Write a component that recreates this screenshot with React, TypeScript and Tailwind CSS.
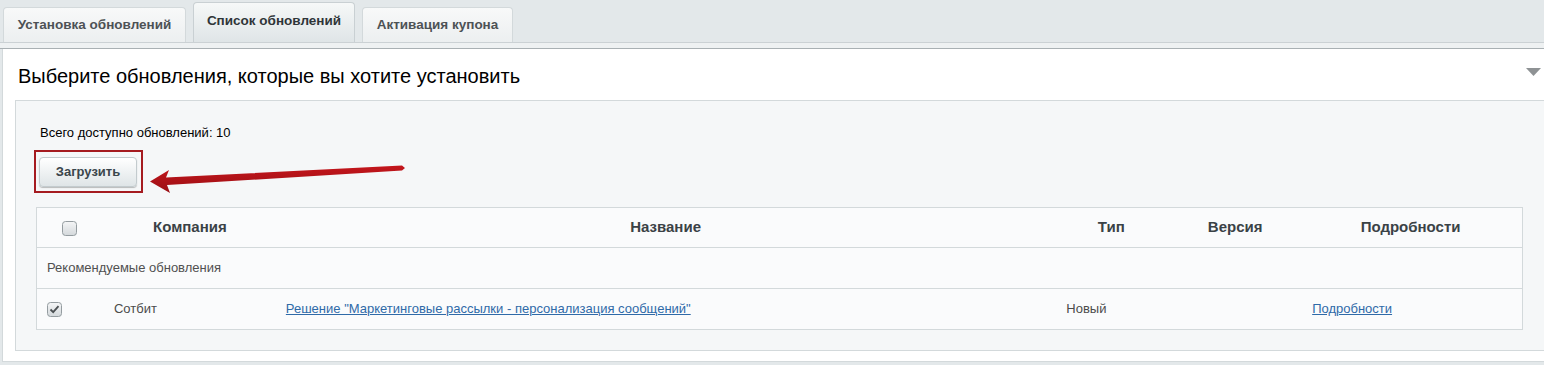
import React from "react";

const font = { fontFamily: '"Liberation Sans", Arial, sans-serif' };

function Tab({ label, active }: { label: string; active?: boolean }) {
	return (
		<div
			className={
				active
					? "flex h-[40px] w-[162px] items-center justify-center rounded-t-[4px] border border-b-0 border-[#c9d0d3] bg-gradient-to-b from-[#f6f8f8] to-[#dfe5e7] pb-[2px] text-[13.5px] font-bold text-[#2f3538]"
					: "flex h-[35px] items-center justify-center rounded-t-[4px] border border-b-0 border-[#d3d9db] bg-gradient-to-b from-[#f8f9f9] to-[#eceff0] text-[13.5px] font-bold text-[#4d5255]"
			}
		>
			{label}
		</div>
	);
}

function Checkbox({ checked }: { checked?: boolean }) {
	return (
		<svg width="15" height="15" viewBox="0 0 15 15">
			<defs>
				<linearGradient id={checked ? "cbc" : "cbu"} x1="0" y1="0" x2="0" y2="1">
					<stop offset="0" stopColor="#f5f6f7" />
					<stop offset="1" stopColor="#d3d8db" />
				</linearGradient>
			</defs>
			<rect
				x="0.5"
				y="0.5"
				width="14"
				height="14"
				rx="3"
				fill={`url(#${checked ? "cbc" : "cbu"})`}
				stroke="#949ca0"
			/>
			{checked && (
				<path d="M3.5 7.5 L6.2 10.2 L11.5 4.2" fill="none" stroke="#4a4f52" strokeWidth="1.8" />
			)}
		</svg>
	);
}

export default function App() {
	return (
		<div className="relative h-[365px] w-[1544px] overflow-hidden bg-[#e3e8ea]" style={font}>
			{/* tabs */}
			<div className="flex h-[42px] items-end gap-[7px] pl-[3px]">
				<div className="w-[183px]">
					<Tab label="Установка обновлений" />
				</div>
				<Tab label="Список обновлений" active={true} />
				<div className="w-[151px]">
					<Tab label="Активация купона" />
				</div>
			</div>
			<div className="h-[7px] border-t border-b border-t-[#cbd1d4] border-b-[#a9b0b3] bg-[#eef1f2]" />

			{/* panel */}
			<div className="ml-[2px] h-[313px] border-l border-b border-[#d3d9db] bg-white">
				<div className="flex h-[51px] items-center justify-between pl-[15px] pr-[3px]">
					<div className="pt-[2px] text-[20px] text-black">Выберите обновления, которые вы хотите установить</div>
					<svg width="15" height="9" viewBox="0 0 15 9" className="mt-[-5px]">
						<polygon points="0,0 15,0 7.5,8" fill="#8e9294" />
					</svg>
				</div>

				<div className="ml-[12px] h-[251px] border-t border-b border-l border-[#d3d9db] bg-[#f5f7f8] pt-[25px] pl-[24px] pr-[21px]">
					<div className="text-[13px] leading-[14px] text-black">Всего доступно обновлений: 10</div>

					<div className="mt-[10px] ml-[-6px] inline-flex border-2 border-[#a51b20] pt-[5px] pr-[4px] pb-[4px] pl-[3px]">
						<button className="h-[30px] w-[98px] rounded-[4px] border border-[#c3cbce] bg-gradient-to-b from-white to-[#dfe5e7] text-[13px] font-bold text-[#3b464c] shadow-[0_1px_1px_rgba(0,0,0,0.25)]">
							Загрузить
						</button>
					</div>

					{/* table */}
					<div className="mt-[14px] ml-[-4px] border border-[#d3d9db] bg-[#fafbfc] text-[13px] text-[#4b4b4b]">
						<div className="flex h-[40px] items-center border-b border-[#d3d9db] text-[15px] font-bold text-[#3a4246]">
							<div className="flex w-[63px] pl-[25px] pt-[1px]">
								<Checkbox />
							</div>
							<div className="w-[180px] text-center">Компания</div>
							<div className="w-[772px] text-center">Название</div>
							<div className="w-[120px] text-center">Тип</div>
							<div className="w-[128px] text-center">Версия</div>
							<div className="w-[223px] text-center">Подробности</div>
						</div>
						<div className="flex h-[41px] items-center border-b border-[#d3d9db] pl-[10px] text-[#505050]">
							Рекомендуемые обновления
						</div>
						<div className="flex h-[40px] items-center">
							<div className="flex w-[63px] pl-[10px] pt-[1px]">
								<Checkbox checked={true} />
							</div>
							<div className="w-[180px] pl-[14px]">Сотбит</div>
							<div className="w-[772px] pl-[6px]">
								<a href="#" className="text-[#2f6aa8] underline">
									Решение "Маркетинговые рассылки - персонализация сообщений"
								</a>
							</div>
							<div className="w-[120px] pl-[15px]">Новый</div>
							<div className="w-[128px]" />
							<div className="w-[223px] pl-[13px]">
								<a href="#" className="text-[#2f6aa8] underline">
									Подробности
								</a>
							</div>
						</div>
					</div>
				</div>
			</div>

			{/* annotation arrow */}
			<svg className="pointer-events-none absolute left-0 top-0" width="1544" height="365">
				<defs>
					<linearGradient id="arr" x1="0" y1="0" x2="0" y2="1">
						<stop offset="0" stopColor="#c4161c" />
						<stop offset="1" stopColor="#9a0f14" />
					</linearGradient>
				</defs>
				<polygon
					points="150,181.5 169,170 166,177.5 402,165.5 405,168 402,170.5 167,185 170,193"
					fill="url(#arr)"
				/>
			</svg>
		</div>
	);
}
